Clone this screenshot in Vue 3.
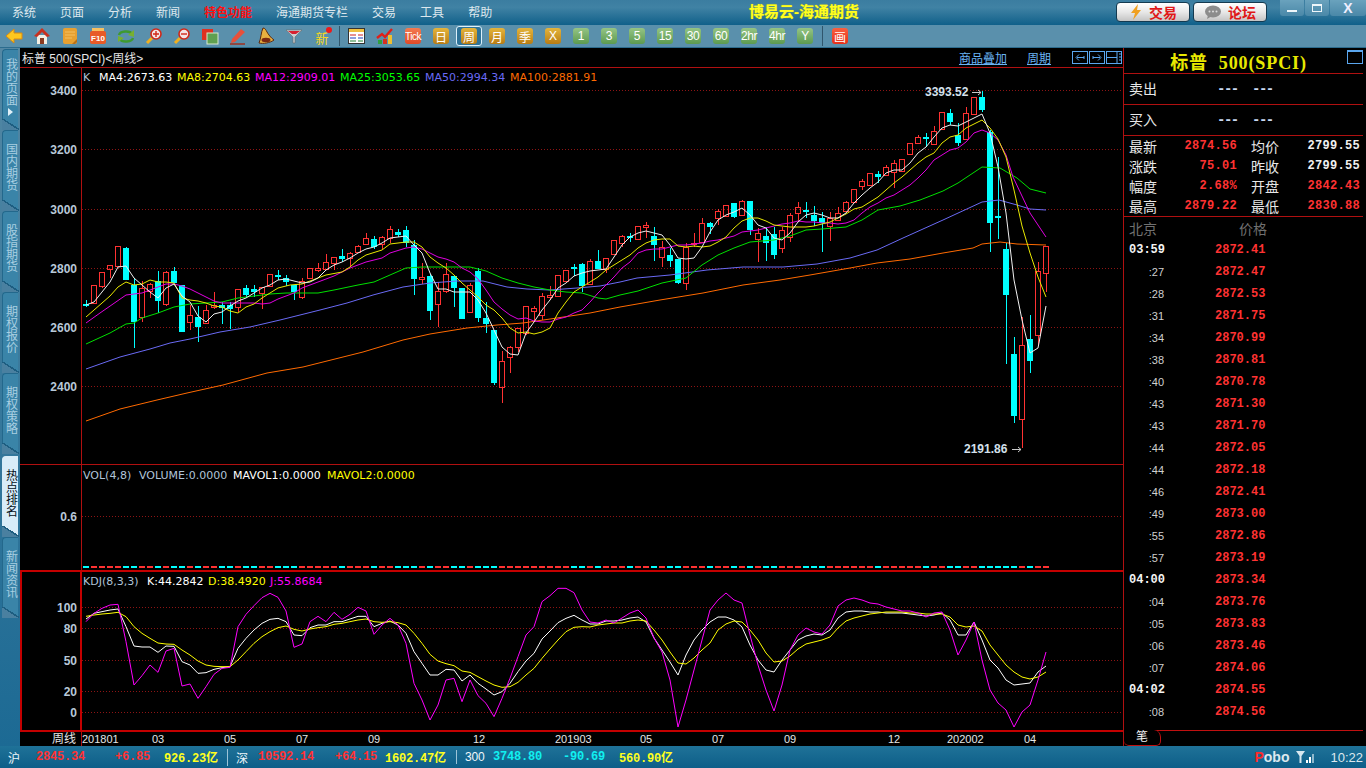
<template>
  <div class="app">
    <header class="titlebar">
      <nav class="menu">
        <span v-for="m in menus" :key="m" :class="{ hot: m === '特色功能' }">{{ m }}</span>
      </nav>
      <div class="brand">博易云-海通期货</div>
      <div class="linkbtns">
        <button class="linkbtn">
          <svg width="14" height="16" viewBox="0 0 14 16"><polygon points="9,0 2,9 6,9 4,16 12,6 8,6" fill="#f0a020" /></svg>
          交易
        </button>
        <button class="linkbtn">
          <svg width="18" height="14" viewBox="0 0 18 14"><ellipse cx="9" cy="6.5" rx="8" ry="6" fill="#8c8c8c" /><polygon points="4,10 3,14 8,11" fill="#8c8c8c" /><circle cx="5.5" cy="6.5" r="1" fill="#ddd" /><circle cx="9" cy="6.5" r="1" fill="#ddd" /><circle cx="12.5" cy="6.5" r="1" fill="#ddd" /></svg>
          论坛
        </button>
      </div>
      <div class="winbtns">
        <span class="win"><i class="w-min"></i></span>
        <span class="win"><i class="w-max"></i></span>
        <span class="win w-close">X</span>
      </div>
    </header>

    <div class="toolbar">
      <span class="tool">
        <svg viewBox="0 0 18 18"><polygon points="1,9 9,2 9,6 17,6 17,12 9,12 9,16" fill="#fdc71e" stroke="#d98a10" /></svg>
      </span>
      <span class="tool">
        <svg viewBox="0 0 18 18"><rect x="4" y="8" width="10" height="9" fill="#f4efe4" /><rect x="7" y="11" width="4" height="6" fill="#8a3a20" /><polygon points="9,1 17,9 14,10 9,5 4,10 1,9" fill="#c8301e" /></svg>
      </span>
      <span class="tool">
        <svg viewBox="0 0 18 18"><rect x="2" y="1" width="14" height="16" rx="2" fill="#e8a030" /><path d="M4 5h10M4 8h10M4 11h7" stroke="#f4c060" /><path d="M11 17l5-5v3l-2 2z" fill="#b87018" /></svg>
      </span>
      <span class="tool">
        <svg viewBox="0 0 18 18"><rect x="1" y="4" width="16" height="13" rx="2" fill="#e85a28" /><rect x="3" y="1" width="12" height="3" fill="#f8c060" /><text x="9" y="14" class="mini">F10</text></svg>
      </span>
      <span class="tool">
        <svg viewBox="0 0 18 18"><path d="M2 8c1-4 11-5 13-1" fill="none" stroke="#3e9a30" stroke-width="2.4" /><polygon points="17,3 17,10 11,8" fill="#78b030" /><path d="M16 11c-1 4-11 5-13 1" fill="none" stroke="#3e9a30" stroke-width="2.4" /><polygon points="1,15 1,9 7,11" fill="#78b030" /></svg>
      </span>
      <span class="tool">
        <svg viewBox="0 0 18 18"><path d="M7 11l-5 5" stroke="#f0b020" stroke-width="3" /><circle cx="11" cy="7" r="5" fill="#f4e4e4" stroke="#d02818" stroke-width="1.6" /><path d="M8 7h6M11 4v6" stroke="#d02818" stroke-width="1.4" /></svg>
      </span>
      <span class="tool">
        <svg viewBox="0 0 18 18"><path d="M7 11l-5 5" stroke="#f0b020" stroke-width="3" /><circle cx="11" cy="7" r="5" fill="#f4e4e4" stroke="#d02818" stroke-width="1.6" /><path d="M8 7h6" stroke="#d02818" stroke-width="1.4" /></svg>
      </span>
      <span class="tool">
        <svg viewBox="0 0 18 18"><rect x="1" y="2" width="11" height="11" fill="#e03020" /><rect x="6" y="6" width="11" height="11" fill="#5fa050" stroke="#d8e8d0" /></svg>
      </span>
      <span class="tool">
        <svg viewBox="0 0 18 18"><polygon points="3,12 12,2 16,5 6,15 2,16" fill="#e8503a" /><path d="M1 17h15" stroke="#a03020" stroke-width="1.5" /></svg>
      </span>
      <span class="tool">
        <svg viewBox="0 0 18 18"><path d="M6 1c2 0 3 2 4 4s4 6 7 8c-4 3-11 4-15 3 2-4 2-11 4-15z" fill="#e8b040" stroke="#5a2810" /><ellipse cx="9" cy="13" rx="4.5" ry="2.2" fill="#7a2810" /></svg>
      </span>
      <span class="tool">
        <svg viewBox="0 0 18 18"><polygon points="1,3 17,3 10,10 10,16 8,16 8,10" fill="#c8d0d4" stroke="#666" stroke-width=".6" /><polygon points="3,4 15,4 11,7 7,7" fill="#d82030" /></svg>
      </span>
      <span class="tool new-icon">
        <span class="xin">新</span><i></i>
      </span>
      <span class="sep"></span>
      <span class="tool">
        <svg viewBox="0 0 18 18"><rect x=".5" y="1.5" width="16" height="15" fill="#fff" stroke="#333" /><rect x="1" y="2" width="15" height="3" fill="#f0c040" /><path d="M2 8h6M10 8h5" stroke="#d02020" /><path d="M2 11h6M10 11h5" stroke="#2040c0" /><path d="M2 14h6M10 14h5" stroke="#208030" /></svg>
      </span>
      <span class="tool">
        <svg viewBox="0 0 18 18"><path d="M1 11l5-4 3 3 7-8" fill="none" stroke="#e02018" stroke-width="2.4" /><rect x="2" y="13" width="4" height="4" fill="#30a040" /><rect x="7" y="12" width="4" height="5" fill="#d83020" /><rect x="12" y="8" width="4" height="9" fill="#f0c030" /></svg>
      </span>
      <span class="tool"><b class="tbtn tick">Tick</b></span>
      <span v-for="b in periodBtns" :key="b.t" class="tool" :class="{ on: b.t === '周' }">
        <b class="tbtn" :class="b.c">{{ b.t }}</b>
      </span>
      <span class="sep"></span>
      <span class="tool"><b class="tbtn draw">画</b></span>
    </div>

    <div class="body">
      <aside class="tabs">
        <div v-for="t in tabs" :key="t" class="tab" :class="{ active: t === '热点排名' }">
          <span class="tab-text">{{ t }}</span>
          <i v-if="t === '我的页面'" class="tab-arrow"></i>
        </div>
      </aside>

      <section class="center">
        <div class="chart-head">
          <span class="chart-name">标普 500(SPCI)&lt;周线&gt;</span>
          <a class="chart-link overlay">商品叠加</a>
          <a class="chart-link">周期</a>
          <span class="head-btns">
            <svg width="50" height="13" viewBox="0 0 50 13" fill="none" stroke="#5aa6ee">
              <rect x=".5" y=".5" width="15" height="12" /><path d="M12 6.5H5M7 3.5l-3 3 3 3M12 5v3" />
              <rect x="17.5" y=".5" width="15" height="12" /><path d="M21 6.5h7M26 3.5l3 3-3 3M21 5v3" />
              <rect x="34.5" y=".5" width="15" height="12" /><path d="M35 6.5h10M45 1v11M47 3h2M47 6h2M47 9h2" />
            </svg>
          </span>
        </div>

        <svg class="pane" width="1103" height="398" viewBox="20 67 1103 398">
          <path d="M20 67.5H1123M20 464.5H1123" class="red" />
          <path d="M81.5 67V465" class="red" />
          <path v-for="g in mainGrid" :key="g.t" :d="`M82 ${g.y + .5}H1123`" class="grid" />
          <text v-for="g in mainGrid" :key="g.t" x="77" :y="g.y + 5" class="axis">{{ g.t }}</text>
          <g shape-rendering="crispEdges">
            <template v-for="c in bars" :key="c.x">
              <template v-if="c.up">
                <path :d="`M${c.x + .5} ${c.h}V${c.top}M${c.x + .5} ${c.bot}V${c.l}`" stroke="#ff3232" />
                <rect :x="c.x - 2.5" :y="c.top + .5" width="5" :height="Math.max(c.bot - c.top, 1)" fill="none" stroke="#ff3232" />
              </template>
              <template v-else>
                <path :d="`M${c.x + .5} ${c.h}V${c.l}`" stroke="#00ffff" />
                <rect :x="c.x - 3" :y="c.top" width="6" :height="Math.max(c.bot - c.top, 2)" fill="#00ffff" />
              </template>
            </template>
          </g>
          <polyline v-for="m in maLines" :key="m.c" :points="m.p" :stroke="m.c" fill="none" stroke-width="1" />
          <text v-for="l in legend" :key="l.t" :x="l.x" y="81" class="legend" :fill="l.c">{{ l.t }}</text>
          <text x="925" y="96" class="mark">3393.52</text>
          <path d="M972 92.5h9M978 90l3 2.5-3 2.5" class="arrow" />
          <text x="964" y="453" class="mark">2191.86</text>
          <path d="M1012 449.5h9M1018 447l3 2.5-3 2.5" class="arrow" />
        </svg>

        <svg class="pane" width="1103" height="105" viewBox="20 465 1103 105">
          <path d="M81.5 465V570" class="red" />
          <path d="M82 516.5H1123" class="grid" />
          <text x="77" y="521" class="axis">0.6</text>
          <text y="479" class="legend">
            <tspan x="83" fill="#b0c4d8">VOL(4,8)</tspan>
            <tspan x="139" fill="#b0c4d8">VOLUME:0.0000</tspan>
            <tspan x="233" fill="#fff">MAVOL1:0.0000</tspan>
            <tspan x="327" fill="#ffff00">MAVOL2:0.0000</tspan>
          </text>
          <g shape-rendering="crispEdges">
            <rect v-for="c in bars" :key="c.x" :x="c.x - 3" y="566" width="6" height="2" :fill="c.up ? '#ff3232' : '#00ffff'" />
          </g>
        </svg>

        <svg class="pane" width="1103" height="162" viewBox="20 570 1103 162">
          <path d="M20 571H1123M20 731H1123M21 570V732M81 570V732" class="red thick" />
          <path v-for="g in kdjGrid" :key="g.t" :d="`M82 ${g.y + .5}H1123`" class="grid" />
          <text v-for="g in kdjGrid" :key="g.t" x="77" :y="g.y + 5" class="axis">{{ g.t }}</text>
          <polyline :points="kLine" stroke="#fff" fill="none" />
          <polyline :points="dLine" stroke="#ffff00" fill="none" />
          <polyline :points="jLine" stroke="#ff00ff" fill="none" />
          <text y="585" class="legend">
            <tspan x="83" fill="#b0c4d8">KDJ(8,3,3)</tspan>
            <tspan x="147" fill="#fff">K:44.2842</tspan>
            <tspan x="208" fill="#ffff00">D:38.4920</tspan>
            <tspan x="270" fill="#ff00ff">J:55.8684</tspan>
          </text>
        </svg>

        <svg class="pane" width="1103" height="14" viewBox="20 732 1103 14">
          <path d="M81.5 732V746" class="red" />
          <text x="76" y="743" class="axis-name">周线</text>
          <text v-for="d in dates" :key="d.x" :x="d.x" y="743" class="date">{{ d.t }}</text>
        </svg>
      </section>

      <aside class="side">
        <div class="side-title">
          <span>标普&nbsp;&nbsp;500(SPCI)</span>
          <i class="expand"></i>
        </div>
        <div class="book">
          <span>卖出</span><b>---</b><b>---</b>
        </div>
        <div class="book">
          <span>买入</span><b>---</b><b>---</b>
        </div>
        <div class="quotes">
          <template v-for="q in quotes" :key="q.l">
            <span class="q-label">{{ q.l }}</span>
            <b class="q-val" :class="q.c">{{ q.v }}</b>
          </template>
        </div>
        <div class="tick-head"><span>北京</span><span>价格</span></div>
        <div class="ticks">
          <div v-for="(t, i) in ticks" :key="i" class="tick-row">
            <span :class="t[0][0] === ':' ? 'sec' : 'min'">{{ t[0] }}</span>
            <b>{{ t[1] }}</b>
          </div>
        </div>
        <div class="side-tabs"><span class="side-tab">笔</span></div>
      </aside>
    </div>

    <footer class="status">
      <span v-for="s in statusItems" :key="s.x" class="st" :class="s.c" :style="{ width: s.w + 'px' }">{{ s.t }}</span>
      <span class="st-right">
        <span class="pobo"><em>P</em>obo</span>
        <svg class="signal" width="24" height="14" viewBox="0 0 24 14"><path d="M1 1h9L6.5 6v7h-2V6z" fill="#d8e8f0" /><rect x="11" y="10" width="2" height="3" fill="#fff" /><rect x="14" y="7" width="2" height="6" fill="#fff" /><rect x="17" y="4" width="2" height="9" fill="#8fb8cc" /></svg>
        <span class="clock">10:22</span>
      </span>
    </footer>
  </div>
</template>

<script setup>
const menus = ["系统", "页面", "分析", "新闻", "特色功能", "海通期货专栏", "交易", "工具", "帮助"];
const tabs = ["我的页面", "国内期货", "股指期货", "期权报价", "期权策略", "热点排名", "新闻资讯"];

const periodBtns = [
  ...["日", "周", "月", "季", "X"].map((t) => ({ t, c: "gold" })),
  ...["1", "3", "5", "15", "30", "60", "2hr", "4hr", "Y"].map((t) => ({ t, c: "green" })),
];

const mainGrid = [
  { t: "3400", y: 90 }, { t: "3200", y: 149 }, { t: "3000", y: 209 },
  { t: "2800", y: 268 }, { t: "2600", y: 327 }, { t: "2400", y: 386 },
];
const kdjGrid = [
  { t: "100", y: 607 }, { t: "80", y: 628 }, { t: "50", y: 660 },
  { t: "20", y: 691 }, { t: "0", y: 712 },
];

const legend = [
  { t: "K", x: 83, c: "#b0c4d8" },
  { t: "MA4:2673.63", x: 99, c: "#ffffff" },
  { t: "MA8:2704.63", x: 177, c: "#ffff00" },
  { t: "MA12:2909.01", x: 255, c: "#ff00ff" },
  { t: "MA25:3053.65", x: 340, c: "#00ff00" },
  { t: "MA50:2994.34", x: 425, c: "#6a6af5" },
  { t: "MA100:2881.91", x: 510, c: "#ff6a00" },
];

const dates = [
  { t: "201801", x: 82 }, { t: "03", x: 152 }, { t: "05", x: 224 }, { t: "07", x: 296 },
  { t: "09", x: 368 }, { t: "12", x: 473 }, { t: "201903", x: 555 }, { t: "05", x: 640 },
  { t: "07", x: 712 }, { t: "09", x: 784 }, { t: "12", x: 888 }, { t: "202002", x: 947 }, { t: "04", x: 1024 },
];

// weekly bars, one every 8px from x=86: up?, body top, body bottom, high, low (pixel rows)
const raw = [
  [0,304,306,300,307],[1,285,303,285,304],[1,272,286,272,288],[1,265,269,265,278],[1,246,266,246,266],[0,248,280,247,280],
  [0,285,322,278,348],[1,288,317,281,322],[1,284,291,283,298],[0,281,301,271,313],[1,272,304,271,306],[0,271,283,267,283],
  [0,285,332,285,332],[1,315,322,305,330],[0,317,327,306,342],[1,310,323,305,324],[1,305,307,292,309],[0,305,308,302,324],
  [0,305,309,302,329],[1,289,307,289,312],[0,288,295,285,297],[0,289,292,285,297],[1,287,293,287,309],[1,274,286,274,286],
  [0,275,277,270,280],[0,278,282,275,286],[0,285,292,285,300],[1,281,297,278,299],[1,268,278,268,278],[1,268,270,263,272],
  [1,262,269,254,269],[1,257,263,257,270],[0,256,259,249,262],[1,253,258,252,267],[1,246,252,245,253],[1,238,244,233,244],
  [0,239,247,236,249],[1,237,244,236,249],[1,229,238,226,243],[0,232,235,229,237],[0,230,243,226,247],[0,245,279,240,295],
  [1,277,279,263,284],[0,276,311,274,320],[1,291,304,282,327],[1,274,291,263,293],[0,276,288,276,307],[0,288,319,288,319],
  [1,285,312,283,312],[0,271,318,268,322],[0,318,324,302,333],[0,330,383,330,385],[1,361,387,351,403],[1,347,357,346,373],
  [1,328,347,328,352],[1,306,333,306,335],[1,308,311,306,322],[1,296,315,293,320],[1,295,297,286,300],[1,275,296,275,297],
  [1,270,281,270,281],[0,267,269,264,276],[0,264,286,263,292],[1,261,284,259,284],[0,261,269,250,269],[1,258,269,258,273],
  [1,240,254,240,254],[1,236,243,235,247],[0,236,238,233,242],[1,226,239,226,239],[1,225,227,222,238],[0,236,245,227,261],
  [1,247,257,241,267],[0,255,261,248,267],[0,259,283,259,284],[1,247,283,243,290],[1,243,244,233,247],[1,223,242,218,242],
  [0,223,227,222,234],[1,211,218,209,225],[1,205,216,205,216],[0,203,217,203,218],[1,201,215,200,216],[0,201,230,201,235],
  [1,233,239,228,262],[0,236,243,227,261],[0,234,255,227,259],[1,230,248,227,253],[1,215,237,213,242],[1,207,213,202,222],
  [0,210,212,202,218],[0,215,221,206,226],[0,218,223,212,252],[1,218,226,212,241],[1,213,220,207,220],[1,202,211,201,212],
  [1,189,202,189,202],[1,181,186,179,190],[1,173,185,173,185],[0,174,177,171,183],[1,167,175,165,176],[1,163,172,160,188],
  [1,159,171,159,171],[1,143,154,143,154],[1,137,143,135,144],[0,137,139,133,147],[1,131,144,126,144],[1,112,129,112,129],
  [0,113,122,109,125],[0,135,143,123,146],[1,113,139,107,139],[1,97,114,97,114],[0,97,110,91,112],[0,132,223,130,252],
  [0,216,218,157,239],[0,249,295,243,364],[0,354,416,337,423],[1,345,419,317,448],[0,339,361,315,373],[1,271,335,262,346],
  [1,246,273,246,292],
];
const bars = raw.map((b, i) => ({ x: 86 + i * 8, up: b[0] === 1, top: b[1], bot: b[2], h: b[3], l: b[4] }));

const maLines = [
  { c: "#ff6a00", p: "86,421 120,409 157,400 187,393 223,385 267,373 303,367 363,352 403,340 430,334 467,328 497,325 523,323 557,318 590,313 620,307 660,300 703,293 743,285 780,280 810,275 850,268 877,263 910,259 943,253 973,248 982,244 1000,242 1017,244 1046,245" },
  { c: "#6a6af5", p: "86,369 120,357 150,349 170,343 190,339 220,332 250,327 280,320 300,315 320,310 347,303 373,295 403,287 430,283 457,281 483,281 507,287 527,289 550,290 577,288 600,286 620,282 637,278 670,275 707,270 743,267 783,267 817,264 850,258 877,250 903,238 943,220 982,202 999,200 1017,205 1030,209 1046,210" },
  { c: "#00e000", p: "86,344 110,333 126,324 134,323 142,318 158,313 174,307 190,304 206,303 222,302 238,298 254,296 270,294 286,293 300,293 318,293 334,290 358,285 374,282 390,275 406,268 422,267 438,267 454,267 470,267 486,271 502,278 518,283 534,287 550,290 566,292 582,293 598,298 606,299 620,295 638,291 662,283 686,278 702,265 718,255 734,248 750,242 774,240 790,236 806,230 822,229 846,227 862,220 878,210 900,206 920,200 943,191 958,183 982,167 1000,168 1017,178 1030,189 1046,193" },
  { c: "#e000e0", p: "86,323 100,313 126,295 134,294 142,293 150,290 158,287 166,284 174,284 182,286 190,289 198,293 206,297 214,301 222,303 230,303 238,303 246,303 254,303 262,304 270,303 278,299 286,296 294,293 302,288 318,282 334,276 350,268 366,262 382,258 390,253 406,248 414,247 422,249 430,253 438,257 446,259 454,262 462,268 470,272 478,279 486,290 494,302 502,309 510,315 518,319 526,318 534,321 542,322 550,322 558,319 566,317 574,313 582,310 590,302 598,293 606,285 614,277 622,268 630,262 638,253 646,250 654,249 662,249 670,247 678,245 686,245 694,244 702,243 710,241 718,240 726,238 734,236 742,232 750,231 758,230 766,228 774,226 782,224 790,223 798,221 806,222 814,222 822,223 830,223 838,224 846,223 854,220 862,213 870,207 878,203 886,198 894,195 902,190 910,185 918,178 926,170 934,160 950,150 958,148 966,142 974,133 982,130 990,133 998,140 1006,155 1013,177 1030,213 1046,237" },
  { c: "#e8e800", p: "86,317 94,310 102,303 110,296 118,287 126,282 134,285 142,284 150,280 158,282 166,282 174,283 182,298 190,300 198,301 206,303 214,306 222,307 230,311 238,313 246,307 254,304 262,298 270,293 278,288 290,285 302,284 310,281 326,275 342,272 350,267 358,260 366,255 382,250 390,244 406,242 414,242 422,247 430,257 438,263 446,268 454,275 462,283 470,290 478,297 486,305 494,310 502,318 510,328 518,333 526,332 534,334 542,332 550,328 558,313 566,302 574,292 582,287 590,282 598,277 606,270 614,265 622,260 630,255 638,248 646,243 654,240 662,239 670,239 678,246 686,247 694,246 702,247 710,246 718,242 726,237 734,228 742,221 750,218 758,218 766,221 774,225 782,226 790,227 798,227 806,227 814,226 822,224 830,222 838,218 846,214 854,209 862,207 870,202 878,197 886,190 894,183 902,177 910,170 918,163 926,157 934,153 942,143 950,137 958,135 966,128 982,120 990,128 998,139 1006,157 1014,190 1022,226 1030,253 1038,277 1046,297" },
  { c: "#f0f0f0", p: "86,305 94,302 102,292 110,282 118,267 126,266 134,278 142,285 150,292 158,298 166,288 174,284 182,296 190,302 198,316 206,322 214,314 222,312 230,306 238,301 246,298 254,293 262,288 270,285 278,280 286,279 294,281 302,283 310,282 318,278 326,270 334,265 342,262 350,258 358,253 366,249 374,247 382,243 390,238 398,237 406,236 414,245 422,253 430,273 438,289 446,289 454,292 462,292 470,292 478,300 486,313 494,330 502,347 510,354 518,355 526,333 534,322 542,310 550,300 558,288 566,283 574,276 582,273 590,271 598,270 606,269 614,257 622,245 630,237 638,233 646,231 654,233 662,235 670,245 678,258 686,259 694,258 702,247 710,232 718,220 726,215 734,212 742,208 750,215 758,225 766,228 774,238 782,240 790,233 798,222 806,215 814,213 822,215 830,218 838,218 846,213 854,203 862,195 870,188 878,182 886,173 894,170 902,170 910,163 918,153 926,147 934,137 942,128 950,125 958,126 966,122 974,118 982,114 990,133 998,167 1006,213 1014,280 1022,320 1030,353 1038,348 1046,306" },
];

// first 63 weeks were read at 3x scale, the rest in plain pixels
const toLine = (zoomed, rest) =>
  [...zoomed.map((v) => 575 + v / 3), ...rest].map((y, i) => `${86 + i * 8},${y}`).join(" ");

const jLine = toLine(
  [140,115,100,90,88,200,330,302,270,292,228,220,333,327,370,335,298,280,277,155,118,92,68,55,67,108,217,207,140,124,140,112,133,118,97,108,178,150,130,150,205,325,375,435,390,315,310,380,315,362,385,425,370,310,245,180,155,80,62,40,40,53,105],
  [622,623,620,623,618,613,610,618,638,652,680,727,700,670,640,610,600,593,600,603,635,665,690,711,685,650,635,628,632,634,625,606,600,598,600,603,604,607,609,611,611,613,617,613,612,630,655,640,622,660,690,703,710,727,712,705,680,652]
);
const kLine = toLine(
  [132,115,110,105,102,155,213,216,216,232,213,214,260,270,295,293,283,278,275,220,190,165,145,133,130,140,180,182,158,150,150,140,140,132,124,124,155,145,138,150,175,230,265,300,300,283,285,318,300,325,342,360,350,325,290,258,235,192,168,143,130,121,135],
  [624,624,621,621,620,618,617,622,638,650,662,675,655,640,630,622,617,617,620,627,645,660,670,672,660,650,640,636,634,635,630,618,612,611,611,612,612,613,613,613,614,615,616,615,613,620,635,635,622,640,660,668,680,685,684,683,672,666]
);
const dLine = toLine(
  [124,120,117,115,112,125,155,175,190,204,207,208,225,240,258,270,274,275,275,255,230,205,185,170,158,153,163,168,162,158,155,148,145,140,135,132,140,142,140,143,150,175,205,238,258,266,272,288,292,305,318,330,337,335,322,300,280,250,222,195,170,157,155],
  [627,625,624,623,623,621,620,621,630,640,652,663,664,658,650,643,630,624,621,622,630,640,653,662,661,656,649,644,642,640,637,628,621,618,616,614,613,612,612,612,613,613,614,614,614,617,625,627,626,631,645,655,665,672,677,679,677,672]
);

const quotes = [
  { l: "最新", v: "2874.56", c: "up" }, { l: "均价", v: "2799.55", c: "" },
  { l: "涨跌", v: "75.01", c: "up" }, { l: "昨收", v: "2799.55", c: "" },
  { l: "幅度", v: "2.68%", c: "up" }, { l: "开盘", v: "2842.43", c: "up" },
  { l: "最高", v: "2879.22", c: "up" }, { l: "最低", v: "2830.88", c: "up" },
];

const ticks = [
  ["03:59","2872.41"],[":27","2872.47"],[":28","2872.53"],[":31","2871.75"],[":34","2870.99"],[":38","2870.81"],
  [":40","2870.78"],[":43","2871.30"],[":43","2871.70"],[":44","2872.05"],[":44","2872.18"],[":46","2872.41"],
  [":49","2873.00"],[":55","2872.86"],[":57","2873.19"],["04:00","2873.34"],[":04","2873.76"],[":05","2873.83"],
  [":06","2873.46"],[":07","2874.06"],["04:02","2874.55"],[":08","2874.56"],
];

const statusItems = [
  { t: "沪", x: 1, w: 28, c: "lab" }, { t: "2845.34", x: 2, w: 79, c: "red" }, { t: "+6.85", x: 3, w: 49, c: "red" },
  { t: "926.23亿", x: 4, w: 63, c: "yel" }, { t: "深", x: 5, w: 31, c: "lab bar" }, { t: "10592.14", x: 6, w: 77, c: "red" },
  { t: "+64.15", x: 7, w: 50, c: "red" }, { t: "1602.47亿", x: 8, w: 71, c: "yel" }, { t: "300", x: 9, w: 37, c: "lab bar" },
  { t: "3748.80", x: 10, w: 70, c: "cy" }, { t: "-90.69", x: 11, w: 56, c: "cy" }, { t: "560.90亿", x: 12, w: 60, c: "yel" },
];
</script>

<style>
html,
body {
  margin: 0;
  background: #000;
}
</style>

<style scoped>
.app {
  width: 1366px;
  height: 768px;
  overflow: hidden;
  display: flex;
  flex-direction: column;
  background: #000;
  font-family: "Liberation Sans", "Noto Sans CJK SC", sans-serif;
  color: #e8e8e8;
}

.titlebar {
  height: 25px;
  flex: none;
  display: flex;
  background: linear-gradient(#3b7da0, #4082a4 30%, #10608a);
  position: relative;
}
.menu {
  display: flex;
  gap: 24px;
  padding-left: 12px;
  font-size: 12px;
  line-height: 26px;
  color: #dde8ee;
}
.menu .hot {
  color: #ff1010;
  font-weight: 700;
}
.brand {
  position: absolute;
  left: 749px;
  top: 2px;
  font-size: 15px;
  line-height: 20px;
  font-weight: 700;
  color: #ffff20;
  text-shadow: 0 0 1px #c8c800;
  white-space: nowrap;
}
.linkbtns {
  position: absolute;
  left: 1116px;
  top: 2px;
  display: flex;
  gap: 3px;
}
.linkbtn {
  width: 74px;
  height: 20px;
  padding: 0;
  display: flex;
  align-items: center;
  justify-content: center;
  gap: 6px;
  border: 1px solid #143a50;
  border-radius: 4px;
  background: linear-gradient(#fff, #e8e8e8 50%, #c4c4c4);
  color: #e01818;
  font-family: inherit;
  font-size: 14px;
  font-weight: 700;
}
.winbtns {
  position: absolute;
  right: 0;
  top: 0;
  display: flex;
  gap: 1px;
}
.win {
  width: 24px;
  height: 16px;
  display: flex;
  align-items: center;
  justify-content: center;
  background: linear-gradient(#6aa2bd, #4a88a8);
  border-radius: 0 0 3px 3px;
  color: #eef;
}
.win:last-child {
  width: 36px;
}
.w-min {
  width: 10px;
  height: 2px;
  margin-top: 5px;
  background: #eef6fa;
}
.w-max {
  width: 8px;
  height: 5px;
  border: 1px solid #eef6fa;
  border-top-width: 2px;
}
.w-close {
  font-size: 14px;
  font-weight: 700;
}

.toolbar {
  height: 23px;
  flex: none;
  display: flex;
  align-items: center;
  background: #5a90ac;
  border-bottom: 1px solid #2c6c8e;
  box-sizing: border-box;
}
.tool {
  width: 28px;
  height: 20px;
  flex: none;
  display: flex;
  align-items: center;
  justify-content: center;
  position: relative;
}
.tool svg {
  width: 18px;
  height: 18px;
}
.mini {
  font-size: 8px;
  font-weight: 700;
  fill: #fff;
  text-anchor: middle;
}
.tool.on {
  width: 26px;
  margin: 0 1px;
  box-sizing: border-box;
  border: 1px solid #dcf0fa;
  border-radius: 3px;
  background: #2f7398;
}
.sep {
  width: 7px;
  flex: none;
  height: 20px;
  background: linear-gradient(#30566c, #30566c) center / 1px 100% no-repeat;
}
.xin {
  color: #f8d820;
  font-size: 13px;
  margin-top: 2px;
}
.new-icon i {
  position: absolute;
  top: 1px;
  right: 4px;
  width: 6px;
  height: 6px;
  border-radius: 50%;
  background: #f01818;
}
.tbtn {
  width: 16px;
  height: 16px;
  display: flex;
  align-items: center;
  justify-content: center;
  border-radius: 3px;
  font-size: 12px;
  font-weight: 400;
  color: #fff;
  white-space: nowrap;
}
.tbtn.gold {
  background: linear-gradient(#e4b43c, #b87c14);
}
.tbtn.green {
  background: linear-gradient(#94c484, #5c9a50);
  letter-spacing: -.4px;
}
.tbtn.tick {
  background: linear-gradient(#f47a50, #e04a28);
  font-size: 10px;
  letter-spacing: -.5px;
}
.tbtn.draw {
  background: linear-gradient(#f86040, #e83018);
}

.body {
  flex: 1;
  min-height: 0;
  display: flex;
}

.tabs {
  width: 20px;
  flex: none;
  box-sizing: border-box;
  padding: 1px 0 0 2px;
  display: flex;
  flex-direction: column;
  background: linear-gradient(#5488a4, #1c6a94);
}
.tab {
  width: 16px;
  height: 81px;
  flex: none;
  box-sizing: border-box;
  position: relative;
  display: flex;
  flex-direction: column;
  align-items: center;
  padding-top: 8px;
  background: #3a84a8;
  border: 1px solid #23688c;
  border-width: 1px 0 0 1px;
  border-radius: 4px 0 0 0;
  color: #a9cfe2;
}
.tab::after {
  content: "";
  position: absolute;
  left: -1px;
  bottom: 0;
  width: 17px;
  height: 11px;
  background: linear-gradient(to top right, #4a80a0 48%, #1d5d80 48%, #1d5d80 56%, transparent 56%);
}
.tab:nth-child(n + 2) {
  padding-top: 12px;
}
.tab.active {
  margin-top: 2px;
  background: #d8ecf8;
  border-color: #d8ecf8;
  color: #06121a;
}
.tab-text {
  writing-mode: vertical-rl;
  text-orientation: upright;
  font-size: 12px;
  line-height: 14px;
}
.tab-arrow {
  margin-top: 2px;
  width: 0;
  height: 0;
  border: 4px solid transparent;
  border-left: 5px solid #e0f0f8;
  border-right: 0;
}

.center {
  width: 1103px;
  flex: none;
  display: flex;
  flex-direction: column;
}
.chart-head {
  height: 19px;
  flex: none;
  display: flex;
  align-items: center;
  padding: 0 1px 0 2px;
  font-size: 12px;
}
.chart-name {
  color: #e6e6e6;
  flex: 1;
}
.chart-link {
  color: #6ab4f4;
  font-size: 12px;
  text-decoration: underline;
}
.overlay {
  margin-right: 20px;
}
.head-btns {
  margin-left: 21px;
  display: flex;
}
.pane {
  display: block;
  flex: none;
}
.red {
  stroke: #b01010;
  fill: none;
}
.thick {
  stroke: #c40000;
  stroke-width: 2;
}
.grid {
  stroke: #8e1414;
  stroke-dasharray: 1 2;
  fill: none;
}
.axis {
  font-size: 12px;
  font-weight: 700;
  fill: #b8c8d8;
  text-anchor: end;
}
.axis-name {
  font-size: 12px;
  fill: #e6e6e6;
  text-anchor: end;
}
.date {
  font-size: 11px;
  fill: #e6e6e6;
}
.legend {
  font-family: "DejaVu Sans", sans-serif;
  font-size: 11px;
}
.mark {
  font-size: 12px;
  font-weight: 700;
  fill: #d4e0ec;
}
.arrow {
  stroke: #c8c8c8;
  fill: none;
}

.side {
  width: 243px;
  flex: none;
  box-sizing: border-box;
  border-left: 1px solid #b01010;
  padding-right: 3px;
  display: flex;
  flex-direction: column;
  font-size: 14px;
}
.side-title {
  height: 26px;
  flex: none;
  box-sizing: border-box;
  border-bottom: 1px solid #b01010;
  position: relative;
  display: flex;
  align-items: center;
  justify-content: center;
  color: #e8e800;
  font-family: "Liberation Serif", "Noto Sans CJK SC", serif;
  font-size: 18px;
  font-weight: 700;
  letter-spacing: .9px;
  padding-right: 10px;
}
.expand {
  position: absolute;
  right: 0;
  top: 2px;
  width: 14px;
  height: 11px;
  border: 1px solid #5aa6ee;
  border-top-width: 2px;
}
.book {
  height: 31px;
  flex: none;
  box-sizing: border-box;
  border-bottom: 1px solid #b01010;
  display: flex;
  align-items: center;
  padding-left: 5px;
}
.book span {
  width: 88px;
  margin-top: -2px;
}
.book b {
  width: 35px;
  color: #c8d8f0;
  font-family: "Liberation Mono", monospace;
  font-size: 14px;
  letter-spacing: -1.5px;
}
.quotes {
  height: 81px;
  flex: none;
  box-sizing: border-box;
  border-bottom: 1px solid #b01010;
  padding: 0 0 0 5px;
  display: grid;
  grid-template-columns: 30px 78px 44px 79px;
  grid-auto-rows: 20px;
  align-items: center;
}
.q-label {
  color: #e8e8e8;
}
.q-val {
  text-align: right;
  font-family: "Liberation Mono", monospace;
  font-size: 12px;
  letter-spacing: .3px;
  color: #f0f0f0;
}
.quotes > .q-label:nth-child(4n + 3) {
  margin-left: 14px;
  white-space: nowrap;
}
.q-val.up {
  color: #ff3232;
}
.tick-head {
  height: 22px;
  flex: none;
  display: flex;
  align-items: center;
  padding-left: 5px;
  gap: 82px;
  color: #707070;
}
.ticks {
  flex: 1;
  min-height: 0;
}
.tick-row {
  height: 22px;
  display: flex;
  align-items: center;
  padding-left: 5px;
}
.tick-row span {
  width: 40px;
  flex: none;
  text-align: right;
  margin-right: 46px;
}
.tick-row .min {
  text-align: left;
  font-family: "Liberation Mono", monospace;
  font-weight: 700;
  font-size: 12px;
  color: #f4f4f4;
}
.tick-row .sec {
  width: 35px;
  margin-right: 51px;
  font-size: 11px;
  color: #d0d0d0;
}
.tick-row b {
  font-family: "Liberation Mono", monospace;
  font-size: 12px;
  color: #ff3232;
}
.side-tabs {
  height: 16px;
  flex: none;
  box-sizing: border-box;
  border-top: 1px solid #c01010;
}
.side-tab {
  display: block;
  width: 37px;
  height: 16px;
  margin-top: -1px;
  box-sizing: border-box;
  background: #000;
  border: 1px solid #c01010;
  border-top: 0;
  border-left: 0;
  border-radius: 0 7px 5px 5px;
  text-align: center;
  font-size: 12px;
  line-height: 15px;
  color: #f0f0f0;
}

.status {
  height: 22px;
  flex: none;
  display: flex;
  align-items: center;
  padding-left: 8px;
  background: linear-gradient(#1f7298, #0d5e88);
  font-family: "Liberation Mono", "Noto Sans CJK SC", monospace;
  font-size: 12px;
  font-weight: 700;
  white-space: nowrap;
}
.st {
  flex: none;
  box-sizing: border-box;
  letter-spacing: -.2px;
}
.st.red {
  color: #ff3232;
}
.st.yel {
  color: #ffff20;
}
.st.cy {
  color: #10f0f0;
}
.st.lab {
  color: #eef6fa;
  font-weight: 400;
  font-family: "Liberation Sans", "Noto Sans CJK SC", sans-serif;
}
.st.bar {
  border-left: 1px solid #9cc4d8;
  padding-left: 8px;
}
.st-right {
  margin-left: auto;
  padding-right: 3px;
  display: flex;
  align-items: center;
  gap: 6px;
  font-family: "Liberation Sans", sans-serif;
}
.signal {
  margin-right: 5px;
}
.pobo {
  color: #dde8ee;
  font-size: 14px;
}
.pobo em {
  color: #ff2a2a;
  font-style: normal;
}
.clock {
  color: #dde8ee;
  font-size: 13px;
  font-weight: 400;
}
</style>
